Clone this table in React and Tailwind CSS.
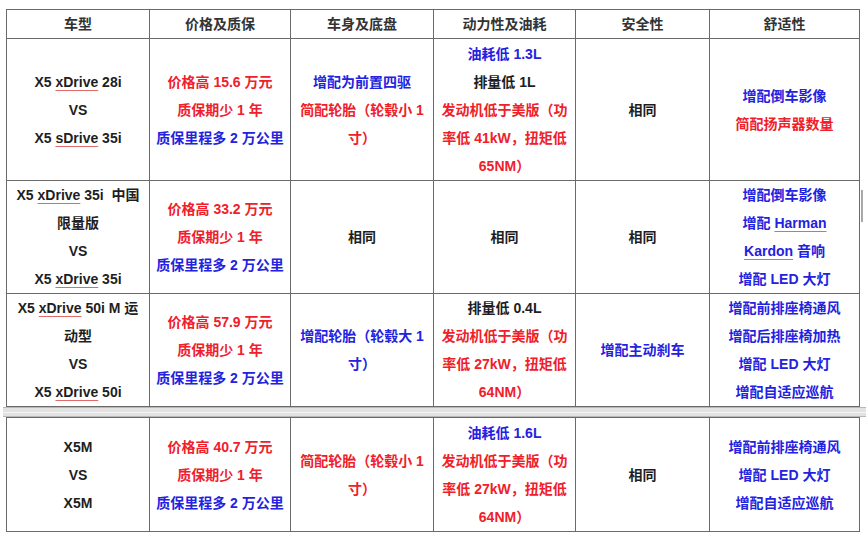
import React from "react";

const RED = "text-[#f0202a]";
const BLUE = "text-[#2222e0]";
const BLACK = "text-[#1e1e1e]";

// one line of text in a cell; c = colour class
function L({ c = BLACK, children }) {
  return <div className={`${c} whitespace-nowrap`}>{children}</div>;
}

function U({ children }) {
  return (
    <span className="underline decoration-[#e06a6a] decoration-1 underline-offset-[3px]">{children}</span>
  );
}

function Cell({ children, last }) {
  return (
    <div
      className={`flex flex-col items-center justify-center text-center border-b border-[#6a6a6a] ${
        last ? "" : "border-r"
      }`}
    >
      {children}
    </div>
  );
}

const headers = ["车型", "价格及质保", "车身及底盘", "动力性及油耗", "安全性", "舒适性"];

const warranty = (price) => [
  <L c={RED} key="a">价格高 {price} 万元</L>,
  <L c={RED} key="b">质保期少 1 年</L>,
  <L c={BLUE} key="c">质保里程多 2 万公里</L>,
];

const rows = [
  [
    [
      <L key="a">X5 <U>xDrive</U> 28i</L>,
      <L key="b">VS</L>,
      <L key="c">X5 <U>sDrive</U> 35i</L>,
    ],
    warranty("15.6"),
    [
      <L c={BLUE} key="a">增配为前置四驱</L>,
      <L c={RED} key="b">简配轮胎（轮毂小 1</L>,
      <L c={RED} key="c">寸）</L>,
    ],
    [
      <L c={BLUE} key="a">油耗低 1.3L</L>,
      <L key="b">排量低 1L</L>,
      <L c={RED} key="c">发动机低于美版（功</L>,
      <L c={RED} key="d">率低 41kW，扭矩低</L>,
      <L c={RED} key="e">65NM）</L>,
    ],
    [<L key="a">相同</L>],
    [
      <L c={BLUE} key="a">增配倒车影像</L>,
      <L c={RED} key="b">简配扬声器数量</L>,
    ],
  ],
  [
    [
      <L key="a">X5 <U>xDrive</U> 35i&nbsp; 中国</L>,
      <L key="b">限量版</L>,
      <L key="c">VS</L>,
      <L key="d">X5 <U>xDrive</U> 35i</L>,
    ],
    warranty("33.2"),
    [<L key="a">相同</L>],
    [<L key="a">相同</L>],
    [<L key="a">相同</L>],
    [
      <L c={BLUE} key="a">增配倒车影像</L>,
      <L c={BLUE} key="b">增配 <U>Harman</U></L>,
      <L c={BLUE} key="c"><U>Kardon</U> 音响</L>,
      <L c={BLUE} key="d">增配 LED 大灯</L>,
    ],
  ],
  [
    [
      <L key="a">X5 <U>xDrive</U> 50i M 运</L>,
      <L key="b">动型</L>,
      <L key="c">VS</L>,
      <L key="d">X5 <U>xDrive</U> 50i</L>,
    ],
    warranty("57.9"),
    [
      <L c={BLUE} key="a">增配轮胎（轮毂大 1</L>,
      <L c={BLUE} key="b">寸）</L>,
    ],
    [
      <L key="a">排量低 0.4L</L>,
      <L c={RED} key="b">发动机低于美版（功</L>,
      <L c={RED} key="c">率低 27kW，扭矩低</L>,
      <L c={RED} key="d">64NM）</L>,
    ],
    [<L c={BLUE} key="a">增配主动刹车</L>],
    [
      <L c={BLUE} key="a">增配前排座椅通风</L>,
      <L c={BLUE} key="b">增配后排座椅加热</L>,
      <L c={BLUE} key="c">增配 LED 大灯</L>,
      <L c={BLUE} key="d">增配自适应巡航</L>,
    ],
  ],
];

const lastRow = [
  [
    <L key="a">X5M</L>,
    <L key="b">VS</L>,
    <L key="c">X5M</L>,
  ],
  warranty("40.7"),
  [
    <L c={RED} key="a">简配轮胎（轮毂小 1</L>,
    <L c={RED} key="b">寸）</L>,
  ],
  [
    <L c={BLUE} key="a">油耗低 1.6L</L>,
    <L c={RED} key="b">发动机低于美版（功</L>,
    <L c={RED} key="c">率低 27kW，扭矩低</L>,
    <L c={RED} key="d">64NM）</L>,
  ],
  [<L key="a">相同</L>],
  [
    <L c={BLUE} key="a">增配前排座椅通风</L>,
    <L c={BLUE} key="b">增配 LED 大灯</L>,
    <L c={BLUE} key="c">增配自适应巡航</L>,
  ],
];

const COLS = "grid grid-cols-[143px_141px_143px_142px_134px_150px]";

export default function App() {
  return (
    <div
      className="relative w-[866px] h-[538px] bg-white overflow-hidden pt-[9px] text-[14px] leading-[28px] font-bold"
      style={{ fontFamily: '"Liberation Sans", "Noto Sans CJK SC", sans-serif' }}
    >
      {/* upper table */}
      <div className="ml-[6px] w-[854px] border-l border-t border-r-0 border-[#6a6a6a]">
        <div className={`${COLS} h-[29px]`}>
          {headers.map((h, i) => (
            <div
              key={h}
              className={`flex items-center justify-center text-[#333] border-b border-[#6a6a6a] ${
                i < 5 ? "border-r" : "border-r"
              }`}
            >
              {h}
            </div>
          ))}
        </div>
        {rows.map((r, ri) => (
          <div key={ri} className={`${COLS} ${ri === 0 ? "h-[142px]" : "h-[113px]"}`}>
            {r.map((cell, ci) => (
              <div
                key={ci}
                className="flex flex-col items-center justify-center text-center border-b border-r border-[#6a6a6a]"
              >
                {cell}
              </div>
            ))}
          </div>
        ))}
      </div>

      {/* split between the two tables */}
      <div className="ml-[3px] mr-0 h-[10px] border-t border-b border-[#b8b8b8] bg-[#e2e2e2] flex flex-col justify-center">
        <div className="h-px bg-[#f4f4f4]" />
      </div>

      {/* lower table */}
      <div className="ml-[6px] w-[854px] border-l border-t border-[#6a6a6a]">
        <div className={`${COLS} h-[114px]`}>
          {lastRow.map((cell, ci) => (
            <div
              key={ci}
              className="flex flex-col items-center justify-center text-center border-b border-r border-[#6a6a6a]"
            >
              {cell}
            </div>
          ))}
        </div>
      </div>

      {/* faint scroll mark at right edge */}
      <div className="absolute left-[861px] top-[190px] w-[2px] h-[32px] bg-[#a8a8a8]" />
    </div>
  );
}
